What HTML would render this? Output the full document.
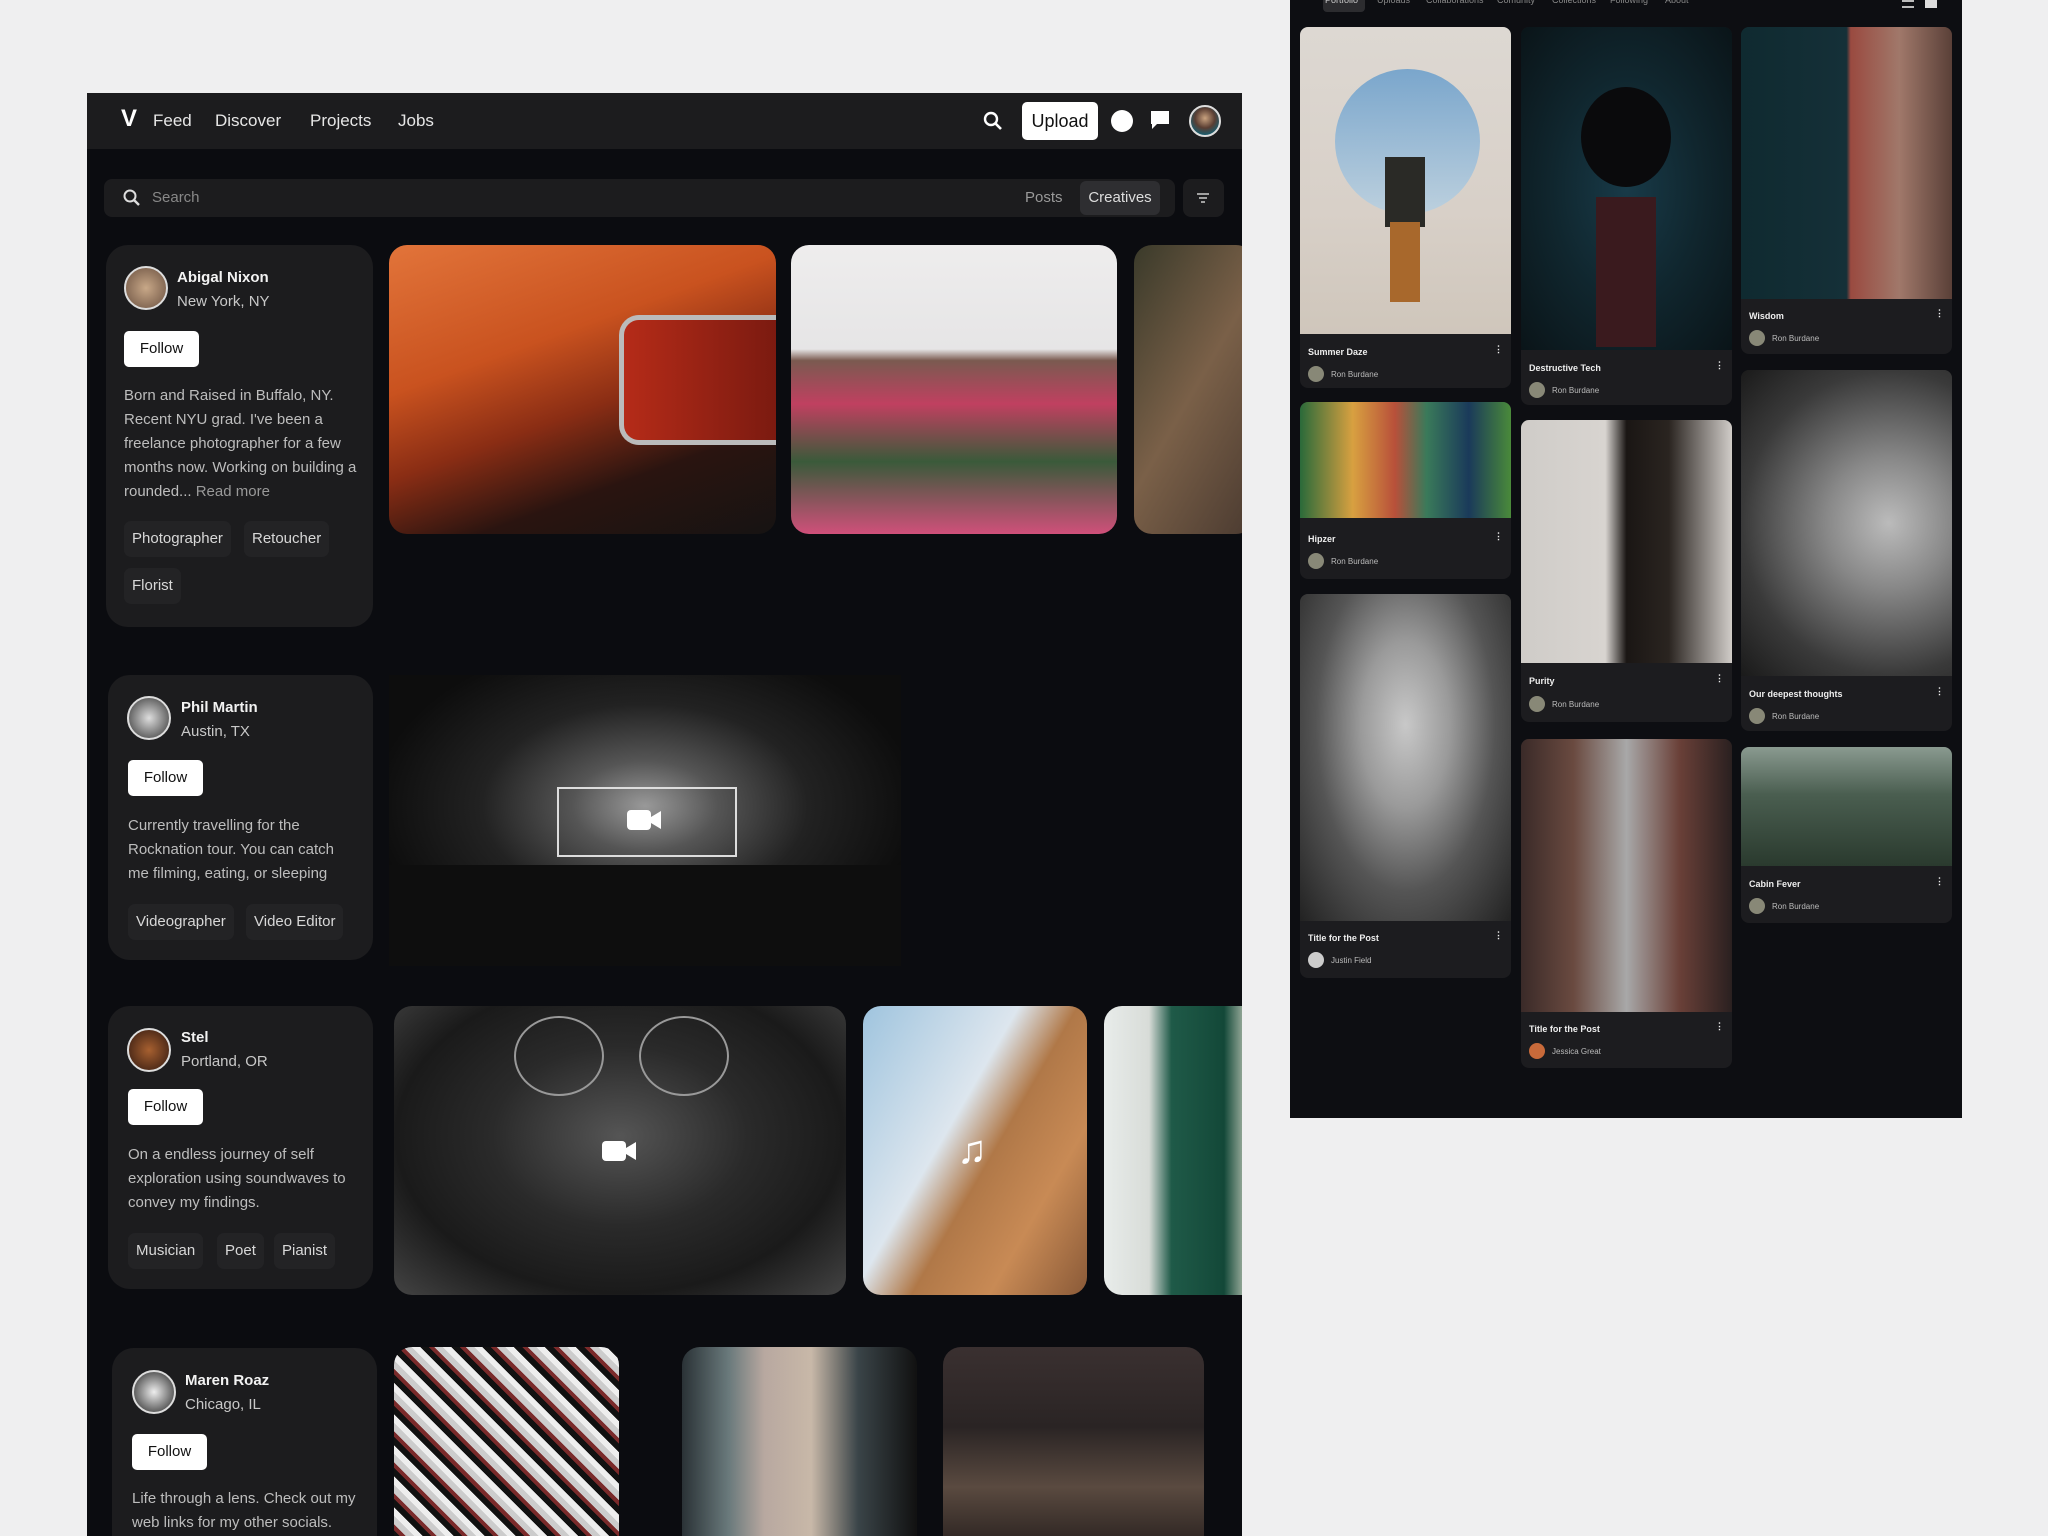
<!DOCTYPE html>
<html><head><meta charset="utf-8"><style>
*{box-sizing:border-box;margin:0;padding:0}
body{width:2048px;height:1536px;background:#efeff0;font-family:"Liberation Sans",sans-serif;position:relative;overflow:hidden;color:#fff}
.a{position:absolute}
#L{left:87px;top:93px;width:1155px;height:1443px;background:#0b0c10;overflow:hidden}
#nav{left:0;top:0;width:1155px;height:56px;background:#1c1c1e}
.nl{font-size:17px;color:#e6e6e6;top:18px}
.card{background:#1c1c1e;border-radius:22px}
.name{font-weight:bold;font-size:15px;color:#f2f2f2}
.loc{font-size:15px;color:#c8c8c8}
.fol{background:#fff;color:#111;font-size:15px;border-radius:5px;width:75px;height:36px;line-height:36px;text-align:center}
.bio{font-size:15px;color:#bdbdbd;line-height:24px}
.tag{background:#232325;color:#d8d8d8;font-size:15px;height:36px;line-height:36px;padding:0 8px;border-radius:7px}
.av{width:44px;height:44px;border-radius:50%;border:2px solid #ddd}
.img{border-radius:18px;overflow:hidden}
#R{left:1290px;top:0;width:672px;height:1118px;background:#0d0e12}
.pc{background:#1c1c1f;border-radius:8px;overflow:hidden}
.pt{font-size:9px;font-weight:bold;color:#eee}
.pa{font-size:8px;color:#bbb}
.dot{width:16px;height:16px;border-radius:50%;background:#887}
.km{font-size:12px;color:#ccc}
</style></head><body>
<div id="L" class="a">
 <div id="nav" class="a">
  <div class="a" style="left:34px;top:12px;font-size:24px;font-weight:bold">V</div>
  <div class="a nl" style="left:66px">Feed</div>
  <div class="a nl" style="left:128px">Discover</div>
  <div class="a nl" style="left:223px">Projects</div>
  <div class="a nl" style="left:311px">Jobs</div>
  <svg class="a" style="left:895px;top:17px" width="22" height="22" viewBox="0 0 22 22"><circle cx="9" cy="9" r="6" stroke="#fff" stroke-width="2.4" fill="none"/><path d="M13 13l6 6" stroke="#fff" stroke-width="2.6"/></svg>
  <div class="a" style="left:935px;top:9px;width:76px;height:38px;background:#fff;border-radius:5px;color:#111;font-size:18px;text-align:center;line-height:38px">Upload</div>
  <div class="a" style="left:1024px;top:17px;width:22px;height:22px;border-radius:50%;background:#fff"></div>
  <svg class="a" style="left:1062px;top:16px" width="22" height="22" viewBox="0 0 22 22"><path d="M2 2h18v13H8l-5 5V15H2z" fill="#fff"/></svg>
  <div class="a" style="left:1102px;top:12px;width:32px;height:32px;border-radius:50%;background:radial-gradient(circle at 50% 40%,#c9a27f 0,#5a3e33 45%,#1c5a6a 75%);border:2px solid #ddd"></div>
 </div>
 <div class="a" style="left:17px;top:86px;width:1071px;height:38px;background:#1c1c1e;border-radius:8px"></div>
 <svg class="a" style="left:35px;top:95px" width="20" height="20" viewBox="0 0 20 20"><circle cx="8" cy="8" r="5.5" stroke="#ddd" stroke-width="2" fill="none"/><path d="M12 12l5 5" stroke="#ddd" stroke-width="2.4"/></svg>
 <div class="a" style="left:65px;top:96px;font-size:15px;color:#888">Search</div>
 <div class="a" style="left:938px;top:96px;font-size:15px;color:#999">Posts</div>
 <div class="a" style="left:993px;top:88px;width:80px;height:34px;background:#2e2e31;border-radius:6px;font-size:15px;color:#ddd;text-align:center;line-height:34px">Creatives</div>
 <div class="a" style="left:1096px;top:86px;width:41px;height:38px;background:#1c1c1e;border-radius:8px"></div>
 <svg class="a" style="left:1108px;top:98px" width="16" height="14"><path d="M2 3h12M4 7h8M6 11h4" stroke="#ccc" stroke-width="1.5"/></svg>

 <!-- card 1 -->
 <div class="a card" style="left:19px;top:152px;width:267px;height:382px"></div>
 <div class="a av" style="left:37px;top:173px;background:radial-gradient(circle,#c8a888,#6a5040)"></div>
 <div class="a name" style="left:90px;top:176px">Abigal Nixon</div>
 <div class="a loc" style="left:90px;top:200px">New York, NY</div>
 <div class="a fol" style="left:37px;top:238px;width:75px">Follow</div>
 <div class="a bio" style="left:37px;top:291px;width:240px">Born and Raised in Buffalo, NY. Recent NYU grad. I've been a freelance photographer for a few months now. Working on building a rounded... <span style="color:#999">Read more</span></div>
 <div class="a tag" style="left:37px;top:428px">Photographer</div>
 <div class="a tag" style="left:157px;top:428px">Retoucher</div>
 <div class="a tag" style="left:37px;top:475px">Florist</div>
 <div class="a img" style="left:302px;top:152px;width:387px;height:289px;background:linear-gradient(160deg,#e2743a 0%,#c9521f 35%,#8a2d14 55%,#2a1410 75%,#161312 100%)"><div class="a" style="left:230px;top:70px;width:160px;height:130px;border:5px solid #bbb;border-right:none;border-radius:20px 0 0 20px;background:linear-gradient(90deg,#b52b18,#7a1a10)"></div></div>
 <div class="a img" style="left:704px;top:152px;width:326px;height:289px;background:linear-gradient(180deg,#eeeded 0%,#e6e5e6 36%,#7a5a50 40%,#c04060 55%,#3a5a3a 75%,#d0507a 100%)"></div>
 <div class="a img" style="left:1047px;top:152px;width:120px;height:289px;background:linear-gradient(120deg,#3a3a2a,#7a6048 50%,#4a3a30)"></div>

 <!-- card 2 -->
 <div class="a card" style="left:21px;top:582px;width:265px;height:285px"></div>
 <div class="a av" style="left:40px;top:603px;background:radial-gradient(circle,#ddd,#333)"></div>
 <div class="a name" style="left:94px;top:606px">Phil Martin</div>
 <div class="a loc" style="left:94px;top:630px">Austin, TX</div>
 <div class="a fol" style="left:41px;top:667px">Follow</div>
 <div class="a bio" style="left:41px;top:721px;width:230px">Currently travelling for the Rocknation tour. You can catch me filming, eating, or sleeping</div>
 <div class="a tag" style="left:41px;top:811px">Videographer</div>
 <div class="a tag" style="left:159px;top:811px">Video Editor</div>
 <div class="a img" style="left:302px;top:582px;width:512px;height:291px;border-radius:0;background:radial-gradient(ellipse at 50% 45%,#999 0,#555 20%,#222 45%,#0d0d0d 75%)"><div class="a" style="left:168px;top:112px;width:180px;height:70px;border:2px solid #ddd"></div><div class="a" style="left:0;top:190px;width:512px;height:101px;background:#0e0e0e"></div></div>
 <svg class="a" style="left:540px;top:714px" width="36" height="26"><rect x="0" y="3" width="24" height="20" rx="4" fill="#fff"/><path d="M24 10l10-6v18l-10-6z" fill="#fff"/></svg>

 <!-- card 3 -->
 <div class="a card" style="left:21px;top:913px;width:265px;height:283px"></div>
 <div class="a av" style="left:40px;top:935px;background:radial-gradient(circle,#a76030,#301810)"></div>
 <div class="a name" style="left:94px;top:936px">Stel</div>
 <div class="a loc" style="left:94px;top:960px">Portland, OR</div>
 <div class="a fol" style="left:41px;top:996px">Follow</div>
 <div class="a bio" style="left:41px;top:1050px;width:240px">On a endless journey of self exploration using soundwaves to convey my findings.</div>
 <div class="a tag" style="left:41px;top:1140px">Musician</div>
 <div class="a tag" style="left:130px;top:1140px">Poet</div>
 <div class="a tag" style="left:187px;top:1140px">Pianist</div>
 <div class="a img" style="left:307px;top:913px;width:452px;height:289px;background:radial-gradient(ellipse at 50% 45%,#555 0,#2a2a2a 40%,#1a1a1a 70%,#444 100%)"><div class="a" style="left:120px;top:10px;width:90px;height:80px;border:2px solid #999;border-radius:50%"></div><div class="a" style="left:245px;top:10px;width:90px;height:80px;border:2px solid #999;border-radius:50%"></div></div>
 <svg class="a" style="left:515px;top:1045px" width="36" height="26"><rect x="0" y="3" width="24" height="20" rx="4" fill="#fff"/><path d="M24 10l10-6v18l-10-6z" fill="#fff"/></svg>
 <div class="a img" style="left:776px;top:913px;width:224px;height:289px;background:linear-gradient(120deg,#9fc4de 0%,#dde6ee 40%,#b07848 55%,#c88a55 75%,#8a5a38 100%)"></div>
 <div class="a" style="left:870px;top:1035px;font-size:40px;color:#fff">♫</div>
 <div class="a img" style="left:1017px;top:913px;width:150px;height:289px;border-radius:18px 0 0 18px;background:linear-gradient(90deg,#e8ecea 0,#d8dcd8 30%,#1f5a48 45%,#134838 80%,#e0e0d0 100%)"></div>

 <!-- card 4 -->
 <div class="a card" style="left:25px;top:1255px;width:265px;height:220px"></div>
 <div class="a av" style="left:45px;top:1277px;background:radial-gradient(circle,#eee,#222)"></div>
 <div class="a name" style="left:98px;top:1279px">Maren Roaz</div>
 <div class="a loc" style="left:98px;top:1303px">Chicago, IL</div>
 <div class="a fol" style="left:45px;top:1341px">Follow</div>
 <div class="a bio" style="left:45px;top:1394px;width:240px">Life through a lens. Check out my web links for my other socials.</div>
 <div class="a img" style="left:307px;top:1254px;width:225px;height:200px;border-radius:18px 18px 0 0;background:repeating-linear-gradient(45deg,#eee 0 6px,#111 6px 12px,#7a2a2a 12px 16px,#ccc 16px 22px)"></div>
 <div class="a img" style="left:595px;top:1254px;width:235px;height:200px;border-radius:18px 18px 0 0;background:linear-gradient(90deg,#2a3236 0,#6a7a7c 20%,#b8a8a0 35%,#c8b8a8 55%,#3a4448 75%,#111 100%)"></div>
 <div class="a img" style="left:856px;top:1254px;width:261px;height:200px;border-radius:18px 18px 0 0;background:linear-gradient(180deg,#3a3030,#2a2424 40%,#5a4a40 70%,#2a2220)"></div>
</div>

<div id="R" class="a">
 <div class="a" style="left:33px;top:0;width:42px;height:12px;background:#2c2c2f;border-radius:0 0 4px 4px"></div>
 <div class="a km" style="left:35px;top:-5px;font-size:9px">Portfolio</div>
 <div class="a km" style="left:87px;top:-5px;font-size:9px;color:#888">Uploads</div>
 <div class="a km" style="left:136px;top:-5px;font-size:9px;color:#888">Collaborations</div>
 <div class="a km" style="left:207px;top:-5px;font-size:9px;color:#888">Comunity</div>
 <div class="a km" style="left:262px;top:-5px;font-size:9px;color:#888">Collections</div>
 <div class="a km" style="left:320px;top:-5px;font-size:9px;color:#888">Following</div>
 <div class="a km" style="left:375px;top:-5px;font-size:9px;color:#888">About</div>
 <div class="a" style="left:612px;top:0;width:12px;height:8px;border-top:2px solid #bbb;border-bottom:2px solid #bbb"></div>
 <div class="a" style="left:635px;top:0;width:12px;height:8px;background:#ddd"></div>

 <div class="a pc" style="left:10px;top:27px;width:211px;height:361px"><div style="height:307px;background:linear-gradient(180deg,#ddd8d2 0,#d8d0c8 60%,#cfc6bb 100%);position:relative"><div class="a" style="left:35px;top:42px;width:145px;height:145px;border-radius:50%;background:linear-gradient(#7aa6cc,#bcd0de)"></div><div class="a" style="left:85px;top:130px;width:40px;height:70px;background:#2a2a26"></div><div class="a" style="left:90px;top:195px;width:30px;height:80px;background:#a8682c"></div></div></div>
 <div class="a pt" style="left:18px;top:347px">Summer Daze</div><div class="a pt" style="left:204px;top:344px">⋮</div>
 <div class="a dot" style="left:18px;top:366px"></div><div class="a pa" style="left:41px;top:370px">Ron Burdane</div>

 <div class="a pc" style="left:10px;top:402px;width:211px;height:177px"><div style="height:116px;background:linear-gradient(90deg,#2a6a3a,#d8a040 25%,#b8503a 45%,#3a7a5a 60%,#1a3a5a 80%,#4a8a3a)"></div></div>
 <div class="a pt" style="left:18px;top:534px">Hipzer</div><div class="a pt" style="left:204px;top:531px">⋮</div>
 <div class="a dot" style="left:18px;top:553px"></div><div class="a pa" style="left:41px;top:557px">Ron Burdane</div>

 <div class="a pc" style="left:10px;top:594px;width:211px;height:384px"><div style="height:327px;background:radial-gradient(ellipse at 50% 40%,#c8c8c8 0,#9a9a9a 30%,#555 60%,#222 100%)"></div></div>
 <div class="a pt" style="left:18px;top:933px">Title for the Post</div><div class="a pt" style="left:204px;top:930px">⋮</div>
 <div class="a dot" style="left:18px;top:952px;background:#ccc"></div><div class="a pa" style="left:41px;top:956px">Justin Field</div>

 <div class="a pc" style="left:231px;top:27px;width:211px;height:378px"><div style="height:323px;background:radial-gradient(ellipse at 50% 50%,#183a48 0,#10262e 50%,#0a1418 100%);position:relative"><div class="a" style="left:60px;top:60px;width:90px;height:100px;border-radius:50%;background:#0a0a0c"></div><div class="a" style="left:75px;top:170px;width:60px;height:150px;background:#3a1a1e"></div></div></div>
 <div class="a pt" style="left:239px;top:363px">Destructive Tech</div><div class="a pt" style="left:425px;top:360px">⋮</div>
 <div class="a dot" style="left:239px;top:382px"></div><div class="a pa" style="left:262px;top:386px">Ron Burdane</div>

 <div class="a pc" style="left:231px;top:420px;width:211px;height:302px"><div style="height:243px;background:linear-gradient(90deg,#cfccc8,#d8d4d0 40%,#1a1614 50%,#2a2420 70%,#d0ccc8)"></div></div>
 <div class="a pt" style="left:239px;top:676px">Purity</div><div class="a pt" style="left:425px;top:673px">⋮</div>
 <div class="a dot" style="left:239px;top:696px"></div><div class="a pa" style="left:262px;top:700px">Ron Burdane</div>

 <div class="a pc" style="left:231px;top:739px;width:211px;height:329px"><div style="height:273px;background:linear-gradient(90deg,#3a2a28,#6a4a40 25%,#a8a8a8 50%,#6a4038 75%,#2a2020)"></div></div>
 <div class="a pt" style="left:239px;top:1024px">Title for the Post</div><div class="a pt" style="left:425px;top:1021px">⋮</div>
 <div class="a dot" style="left:239px;top:1043px;background:#c86a3a"></div><div class="a pa" style="left:262px;top:1047px">Jessica Great</div>

 <div class="a pc" style="left:451px;top:27px;width:211px;height:327px"><div style="height:272px;background:linear-gradient(90deg,#0f2a30 0,#153038 50%,#9a4a40 52%,#a0786a 75%,#5a4038 100%)"></div></div>
 <div class="a pt" style="left:459px;top:311px">Wisdom</div><div class="a pt" style="left:645px;top:308px">⋮</div>
 <div class="a dot" style="left:459px;top:330px"></div><div class="a pa" style="left:482px;top:334px">Ron Burdane</div>

 <div class="a pc" style="left:451px;top:370px;width:211px;height:361px"><div style="height:306px;background:radial-gradient(ellipse at 70% 50%,#bbb 0,#888 30%,#3a3a3a 70%,#1a1a1a 100%)"></div></div>
 <div class="a pt" style="left:459px;top:689px">Our deepest thoughts</div><div class="a pt" style="left:645px;top:686px">⋮</div>
 <div class="a dot" style="left:459px;top:708px"></div><div class="a pa" style="left:482px;top:712px">Ron Burdane</div>

 <div class="a pc" style="left:451px;top:747px;width:211px;height:176px"><div style="height:119px;background:linear-gradient(180deg,#8a9a90 0,#4a5e50 40%,#2a3a2e 100%)"></div></div>
 <div class="a pt" style="left:459px;top:879px">Cabin Fever</div><div class="a pt" style="left:645px;top:876px">⋮</div>
 <div class="a dot" style="left:459px;top:898px"></div><div class="a pa" style="left:482px;top:902px">Ron Burdane</div>
</div>
</body></html>
